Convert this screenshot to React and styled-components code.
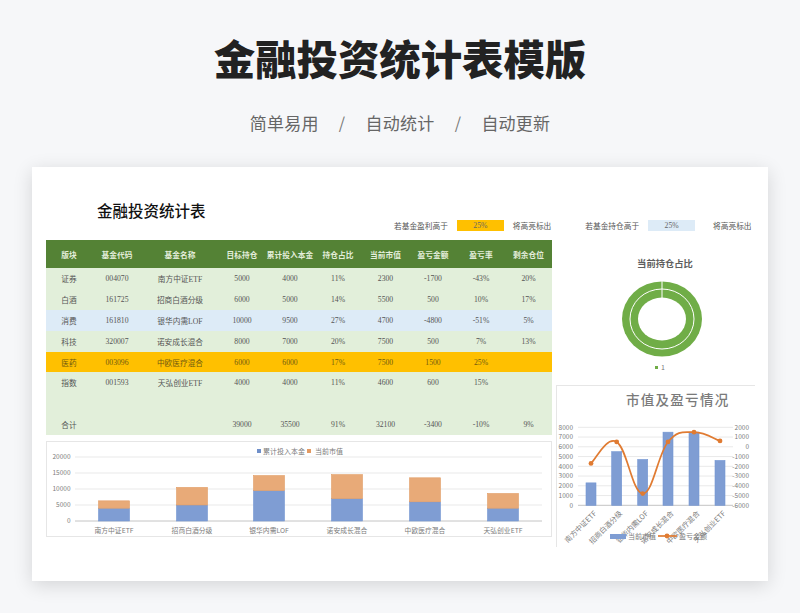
import React from "react";
import styled, { createGlobalStyle } from "styled-components";

const sans = `"Noto Sans CJK SC", "Noto Sans", sans-serif`;
const serif = `"Liberation Serif", "Noto Sans CJK SC", serif`;

const GlobalStyle = createGlobalStyle`
  html, body {
    margin: 0;
    padding: 0;
    background: #f6f7f9;
  }
  * {
    box-sizing: border-box;
  }
`;

const Page = styled.div`
  width: 800px;
  height: 613px;
  overflow: hidden;
  background: #f6f7f9;
`;

const Hero = styled.header`
  height: 167px;
  padding-top: 27px;
  display: flex;
  flex-direction: column;
  align-items: center;
  font-family: ${sans};
`;

const HeroTitle = styled.h1`
  margin: 0;
  height: 60px;
  line-height: 60px;
  font-size: 41.4px;
  font-weight: 900;
  color: #222;
`;

const HeroTags = styled.div`
  margin-top: 22px;
  display: flex;
  align-items: center;
  gap: 17.5px;
  height: 26px;
  font-size: 17px;
  letter-spacing: 0.2px;
  color: #666;
`;

const Slash = styled.span`
  width: 12px;
  text-align: center;
  font-size: 16px;
  color: #777;
`;

const Sheet = styled.section`
  width: 736px;
  height: 414px;
  margin-left: 32px;
  padding-left: 14px;
  background: #fff;
  box-shadow: 0 4px 18px rgba(0, 0, 0, 0.14);
  font-family: ${serif};
  overflow: hidden;
`;

const SheetHead = styled.div`
  height: 73px;
  padding-top: 35px;
`;

const SheetTitle = styled.h2`
  margin: 0 0 0 51px;
  height: 20px;
  line-height: 20px;
  font-size: 15.5px;
  font-weight: 500;
  color: #111;
`;

const Rules = styled.div`
  margin-left: 348px;
  margin-top: -2px;
  display: flex;
  align-items: center;
  height: 11px;
`;

const RuleGroup = styled.div`
  display: flex;
  align-items: center;
  gap: 9px;
  font-size: 7.7px;
  color: #555;
  margin-right: ${(p) => p.$after}px;
`;

const Swatch = styled.div`
  width: 47px;
  height: 11px;
  line-height: 11px;
  text-align: center;
  background: ${(p) => p.$bg};
  color: #666;
  margin-right: ${(p) => p.$extra || 0}px;
`;

const Body = styled.div`
  display: grid;
  grid-template-columns: 506px 1fr;
`;

const LeftCol = styled.div`
  display: flex;
  flex-direction: column;
  gap: 6px;
`;

const RightCol = styled.div`
  display: flex;
  flex-direction: column;
`;

const Table = styled.div`
  background: #e2efda;
  font-size: 7.7px;
  color: #555;
`;

const Row = styled.div`
  display: grid;
  grid-template-columns: 46px 50px 76px 48px 48px 48px 47px 48px 48px 47px;
  align-items: center;
  text-align: center;
  height: ${(p) => p.$h || 21}px;
  background: ${(p) => p.$bg || "transparent"};
  color: ${(p) => p.$color || "inherit"};
`;

const HeadRow = styled(Row)`
  font-weight: 700;
  letter-spacing: 0.1px;
`;

const ChartBox = styled.div`
  height: 96px;
  border: 1px solid #e6e6e6;
  background: #fff;
`;

const DonutPanel = styled.div`
  height: 145px;
  display: flex;
  flex-direction: column;
  align-items: center;
  padding: 16px 0 0 10px;
  font-family: ${sans};
`;

const DonutTitle = styled.div`
  font-size: 9.3px;
  line-height: 14px;
  font-weight: 700;
  color: #5e5e5e;
  margin-bottom: 11px;
`;

const DonutLegend = styled.div`
  display: flex;
  align-items: center;
  gap: 3px;
  margin: 5px 10px 0 0;
  font-size: 7px;
  line-height: 10px;
  color: #777;
`;

const LegendDot = styled.i`
  width: 3px;
  height: 3px;
  background: #70ad47;
`;

const ComboBox = styled.div`
  width: 199px;
  height: 162px;
  margin-left: 4px;
  border-left: 1px solid #e6e6e6;
  border-top: 1px solid #e6e6e6;
`;

const Svg = styled.svg`
  display: block;
  font-family: ${sans};
`;

const DonutSvg = styled(Svg)`
  margin-right: 6px;
`;

const rows = [
  ["证券", "004070", "南方中证ETF", 5000, 4000, "11%", 2300, -1700, "-43%", "20%"],
  ["白酒", "161725", "招商白酒分级", 6000, 5000, "14%", 5500, 500, "10%", "17%"],
  ["消费", "161810", "银华内需LOF", 10000, 9500, "27%", 4700, -4800, "-51%", "5%"],
  ["科技", "320007", "诺安成长混合", 8000, 7000, "20%", 7500, 500, "7%", "13%"],
  ["医药", "003096", "中欧医疗混合", 6000, 6000, "17%", 7500, 1500, "25%", ""],
  ["指数", "001593", "天弘创业ETF", 4000, 4000, "11%", 4600, 600, "15%", ""],
];

const heads = ["版块", "基金代码", "基金名称", "目标持仓", "累计投入本金", "持仓占比", "当前市值", "盈亏金额", "盈亏率", "剩余仓位"];
const total = ["合计", "", "", 39000, 35500, "91%", 32100, -3400, "-10%", "9%"];

const names = rows.map((r) => r[2]);
const invested = rows.map((r) => r[4]);
const market = rows.map((r) => r[6]);
const profit = rows.map((r) => r[7]);

const cells = (r) => r.map((c, i) => <span key={i}>{c}</span>);

const BLUE = "#7f9dd3";
const ORANGE = "#e8aa78";
const GRID = "#e9e9e9";
const LABEL = "#7c7c7c";

const StackedChart = () => {
  // box content starts at x=47 y=442 in the screenshot
  const top = 15;
  const base = 79;
  const centers = [67, 145, 222, 300, 378, 456];
  const y = (v) => (v * (base - top)) / 20000;
  return (
    <Svg width="504" height="94" viewBox="0 0 504 94">
      <rect x="210" y="7" width="4" height="4" fill="#6f8fc9" />
      <text x="216" y="11.5" fontSize="7" fill={LABEL}>累计投入本金</text>
      <rect x="260" y="7" width="4" height="4" fill="#e39a62" />
      <text x="268" y="11.5" fontSize="7" fill={LABEL}>当前市值</text>
      {[20000, 15000, 10000, 5000, 0].map((v, i) => (
        <g key={v}>
          <line x1="28" x2="495" y1={top + i * 16} y2={top + i * 16} stroke={v === 0 ? "#c4c4c4" : GRID} />
          <text x="23.5" y={top + i * 16 + 2.3} fontSize="6.5" textAnchor="end" fill={LABEL}>{v}</text>
        </g>
      ))}
      {centers.map((c, i) => (
        <g key={c}>
          <rect x={c - 15.5} y={base - y(invested[i])} width="31" height={y(invested[i])} fill={BLUE} stroke="#7396d3" strokeWidth="0.6" />
          <rect x={c - 15.5} y={base - y(invested[i] + market[i])} width="31" height={y(market[i])} fill={ORANGE} stroke="#e29d66" strokeWidth="0.6" />
          <text x={c} y="90.5" fontSize="6.8" textAnchor="middle" fill={LABEL}>{names[i]}</text>
        </g>
      ))}
    </Svg>
  );
};

const Donut = () => (
  <DonutSvg width="80" height="76" viewBox="-40 -38 80 76">
    <ellipse rx="40" ry="37.5" fill="#70ad47" />
    <ellipse rx="32" ry="30" fill="none" stroke="#fff" strokeWidth="1" />
    <ellipse rx="24" ry="21.5" fill="#fff" />
    <line x1="0" x2="0" y1="-38" y2="-21" stroke="#fff" strokeWidth="1" />
  </DonutSvg>
);

const ComboChart = () => {
  // box content starts at x=557 y=386 in the screenshot
  const top = 41.3;
  const base = 119.3;
  const centers = [34, 59.7, 85.7, 111, 137, 163];
  const left = (v) => base - (v * (base - top)) / 8000;
  const right = (v) => base - ((v + 6000) * (base - top)) / 8000;
  const pts = profit.map((v, i) => [centers[i], right(v)]);
  let d = `M${pts[0][0]} ${pts[0][1]}`;
  for (let i = 0; i < pts.length - 1; i++) {
    const [x0, y0] = pts[Math.max(i - 1, 0)];
    const [x1, y1] = pts[i];
    const [x2, y2] = pts[i + 1];
    const [x3, y3] = pts[Math.min(i + 2, pts.length - 1)];
    d += ` C${x1 + (x2 - x0) / 5} ${y1 + (y2 - y0) / 5} ${x2 - (x3 - x1) / 5} ${y2 - (y3 - y1) / 5} ${x2} ${y2}`;
  }
  return (
    <Svg width="198" height="161" viewBox="0 0 198 161">
      <text x="120.7" y="19" fontSize="13.5" fontWeight="500" letterSpacing="1.3" textAnchor="middle" fill="#7a7a7a">市值及盈亏情况</text>
      {[8000, 7000, 6000, 5000, 4000, 3000, 2000, 1000, 0].map((v, i) => {
        const ly = top + i * 9.75;
        return (
          <g key={v}>
            <line x1="21" x2="176" y1={ly} y2={ly} stroke={v === 0 ? "#c4c4c4" : GRID} />
            <text x="16" y={ly + 2.3} fontSize="6.5" textAnchor="end" fill={LABEL}>{v}</text>
            <text x="192" y={ly + 2.3} fontSize="6.5" textAnchor="end" fill={LABEL}>{v - 6000}</text>
          </g>
        );
      })}
      {centers.map((c, i) => (
        <rect key={c} x={c - 5} y={left(market[i])} width="10" height={base - left(market[i])} fill={BLUE} stroke="#7396d3" strokeWidth="0.6" />
      ))}
      {centers.map((c, i) => (
        <text key={c} x={c + 6} y="128" fontSize="7.2" textAnchor="end" fill={LABEL} transform={`rotate(-45 ${c + 6} 128)`}>{names[i]}</text>
      ))}
      <path d={d} fill="none" stroke="#e07b32" strokeWidth="1.7" />
      {pts.map(([x, py]) => (
        <circle key={x} cx={x} cy={py} r="2.4" fill="#e07b32" />
      ))}
      <rect x="53" y="148" width="16" height="5" fill={BLUE} />
      <text x="71" y="153" fontSize="7" fill={LABEL}>当前市值</text>
      <line x1="101" x2="120" y1="150" y2="150" stroke="#e07b32" strokeWidth="1.7" />
      <circle cx="110" cy="150" r="2.4" fill="#e07b32" />
      <text x="122" y="153" fontSize="7" fill={LABEL}>盈亏金额</text>
    </Svg>
  );
};

const App = () => (
  <Page>
    <GlobalStyle />
    <Hero>
      <HeroTitle>金融投资统计表模版</HeroTitle>
      <HeroTags>
        <span>简单易用</span>
        <Slash>/</Slash>
        <span>自动统计</span>
        <Slash>/</Slash>
        <span>自动更新</span>
      </HeroTags>
    </Hero>
    <Sheet>
      <SheetHead>
        <SheetTitle>金融投资统计表</SheetTitle>
        <Rules>
          <RuleGroup $after={34}>
            <span>若基金盈利高于</span>
            <Swatch $bg="#ffc000">25%</Swatch>
            <span>将高亮标出</span>
          </RuleGroup>
          <RuleGroup $after={0}>
            <span>若基金持仓高于</span>
            <Swatch $bg="#ddebf7" $extra={9}>25%</Swatch>
            <span>将高亮标出</span>
          </RuleGroup>
        </Rules>
      </SheetHead>
      <Body>
        <LeftCol>
          <Table>
            <HeadRow $h={28} $bg="#548235" $color="#e4eedc">{cells(heads)}</HeadRow>
            <Row>{cells(rows[0])}</Row>
            <Row>{cells(rows[1])}</Row>
            <Row $bg="#ddebf7">{cells(rows[2])}</Row>
            <Row>{cells(rows[3])}</Row>
            <Row $h={20} $bg="#ffc000" $color="#6f5a10">{cells(rows[4])}</Row>
            <Row>{cells(rows[5])}</Row>
            <Row />
            <Row>{cells(total)}</Row>
          </Table>
          <ChartBox>
            <StackedChart />
          </ChartBox>
        </LeftCol>
        <RightCol>
          <DonutPanel>
            <DonutTitle>当前持仓占比</DonutTitle>
            <Donut />
            <DonutLegend>
              <LegendDot />
              <span>1</span>
            </DonutLegend>
          </DonutPanel>
          <ComboBox>
            <ComboChart />
          </ComboBox>
        </RightCol>
      </Body>
    </Sheet>
  </Page>
);

export default App;
